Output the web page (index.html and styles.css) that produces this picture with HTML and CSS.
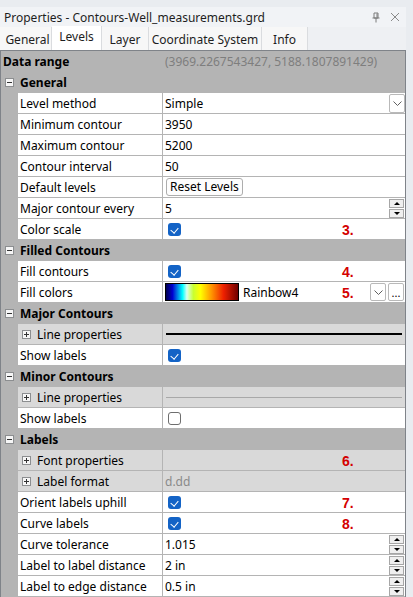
FILE: index.html
```html
<!DOCTYPE html>
<html lang="en">
<head>
    <meta charset="UTF-8">
    <title>Properties - Contours-Well_measurements.grd</title>
    <link rel="stylesheet" href="styles.css">
</head>
<body>

<div class="window">
    <!-- Title bar -->
    <div class="titlebar">
        <span class="title">Properties - Contours-Well_measurements.grd</span>
        <svg class="tb-icon" width="10" height="11" viewBox="0 0 10 11"><path d="M3 1h4v5H3zM1.5 6h7M5 6v4.5M6 1.5v4" fill="none" stroke="#7a7a7a" stroke-width="1"/></svg>
        <svg class="tb-icon" width="10" height="10" viewBox="0 0 10 10"><path d="M1 1l8 8M9 1l-8 8" stroke="#8a8a8a" stroke-width="1"/></svg>
    </div>

    <!-- Tabs -->
    <div class="tabs">
        <div class="tab t-general">General</div>
        <div class="tab active t-levels">Levels</div>
        <div class="tab t-layer">Layer</div>
        <div class="tab t-coord">Coordinate System</div>
        <div class="tab t-info">Info</div>
    </div>

    <!-- Property grid -->
    <div class="grid">
        <div class="data-row">
            <div class="data-name">Data range</div>
            <div class="data-val">(3969.2267543427, 5188.1807891429)</div>
        </div>

        <div class="cat"><span class="tog minus"></span>General</div>
        <div class="row">
            <div class="name">Level method</div>
            <div class="val">Simple<span class="drop"><svg width="9" height="5" viewBox="0 0 9 5"><path d="M0.5 0.5l4 4 4-4" fill="none" stroke="#606060"/></svg></span></div>
        </div>
        <div class="row"><div class="name">Minimum contour</div><div class="val">3950</div></div>
        <div class="row"><div class="name">Maximum contour</div><div class="val">5200</div></div>
        <div class="row"><div class="name">Contour interval</div><div class="val">50</div></div>
        <div class="row"><div class="name">Default levels</div><div class="val"><span class="btn-reset">Reset Levels</span></div></div>
        <div class="row">
            <div class="name">Major contour every</div>
            <div class="val">5<span class="spin"><span class="sb up"></span><span class="sb down"></span></span></div>
        </div>
        <div class="row"><div class="name">Color scale</div><div class="val"><span class="chk on"></span><span class="num">3.</span></div></div>

        <div class="cat"><span class="tog minus"></span>Filled Contours</div>
        <div class="row"><div class="name">Fill contours</div><div class="val"><span class="chk on"></span><span class="num">4.</span></div></div>
        <div class="row">
            <div class="name">Fill colors</div>
            <div class="val">
                <span class="ramp"></span><span class="ramp-name">Rainbow4</span><span class="num">5.</span>
                <span class="drop small"><svg width="9" height="5" viewBox="0 0 9 5"><path d="M0.5 0.5l4 4 4-4" fill="none" stroke="#606060"/></svg></span>
                <span class="dots">...</span>
            </div>
        </div>

        <div class="cat"><span class="tog minus"></span>Major Contours</div>
        <div class="row sub"><div class="name"><span class="tog plus"></span>Line properties</div><div class="val"><span class="line major"></span></div></div>
        <div class="row"><div class="name">Show labels</div><div class="val"><span class="chk on"></span></div></div>

        <div class="cat"><span class="tog minus"></span>Minor Contours</div>
        <div class="row sub"><div class="name"><span class="tog plus"></span>Line properties</div><div class="val"><span class="line minor"></span></div></div>
        <div class="row"><div class="name">Show labels</div><div class="val"><span class="chk"></span></div></div>

        <div class="cat"><span class="tog minus"></span>Labels</div>
        <div class="row sub"><div class="name"><span class="tog plus"></span>Font properties</div><div class="val"><span class="num">6.</span></div></div>
        <div class="row sub"><div class="name"><span class="tog plus"></span>Label format</div><div class="val muted">d.dd</div></div>
        <div class="row"><div class="name">Orient labels uphill</div><div class="val"><span class="chk on"></span><span class="num">7.</span></div></div>
        <div class="row"><div class="name">Curve labels</div><div class="val"><span class="chk on"></span><span class="num">8.</span></div></div>
        <div class="row">
            <div class="name">Curve tolerance</div>
            <div class="val">1.015<span class="spin"><span class="sb up"></span><span class="sb down"></span></span></div>
        </div>
        <div class="row">
            <div class="name">Label to label distance</div>
            <div class="val">2 in<span class="spin"><span class="sb up"></span><span class="sb down"></span></span></div>
        </div>
        <div class="row">
            <div class="name">Label to edge distance</div>
            <div class="val">0.5 in<span class="spin"><span class="sb up"></span><span class="sb down"></span></span></div>
        </div>
    </div>
</div>

</body>
</html>
```

FILE: styles.css
```css
* { margin: 0; padding: 0; box-sizing: border-box; }
body { background: #e9ecf0; font-family: "Noto Sans", "Open Sans", sans-serif; font-size: 12px; color: #000; overflow: hidden; }

.window { width: 406px; }

/* Title bar */
.titlebar { margin-top: 7px; height: 20px; background: #f1f3f6; display: flex; align-items: center; padding-left: 4px; padding-right: 6px; gap: 9px; color: #1e1e1e; }
.titlebar .title { flex: 1; }
.tb-icon { display: block; }

/* Tabs */
.tabs { height: 23px; display: flex; background: #eef0f3; }
.tab { height: 23px; line-height: 23px; padding-top: 1px; border-right: 1px solid #dadcdf; background: #f7f7f7; color: #1e1e1e; text-align: center; }
.tab.active { background: #fff; margin-top: -1px; height: 24px; line-height: 20px; }
.t-general { width: 52px; padding-left: 4px; }
.t-levels { width: 50px; }
.t-layer { width: 47px; }
.t-coord { width: 113px; }
.t-info { width: 46px; }

/* Grid */
.grid { border: 1px solid #7f8389; border-bottom: none; background: #b4b4b4; height: 548px; }
.data-row { height: 21px; display: flex; align-items: center; }
.data-name { width: 164px; padding-left: 2px; font-weight: bold; }
.data-val { color: #7e7e7e; }

.cat { height: 21px; display: flex; align-items: center; font-weight: bold; padding-left: 4px; gap: 6px; }

.row { height: 21px; display: flex; padding-left: 17px; padding-bottom: 1px; gap: 1px; }
.name { width: 144px; background: #fff; padding-left: 2px; display: flex; align-items: center; }
.val { flex: 1; background: #fff; padding-left: 2px; display: flex; align-items: center; position: relative; }
.row.sub .name, .row.sub .val { background: #d9d9d9; }
.row.sub .name { padding-left: 4px; gap: 6px; }
.val.muted { color: #8a8a8a; }

/* expand / collapse boxes */
.tog { width: 9px; height: 9px; border: 1px solid #8c8e90; background: #f6f6f6; position: relative; flex-shrink: 0; }
.tog::before { content: ""; position: absolute; left: 1px; top: 3px; width: 5px; height: 1px; background: #333; }
.tog.plus::after { content: ""; position: absolute; left: 3px; top: 1px; width: 1px; height: 5px; background: #333; }

/* controls */
.drop { margin-left: auto; width: 16px; height: 19px; border: 1px solid #b9b9b9; border-radius: 2px; background: #fff; display: flex; align-items: center; justify-content: center; }
.drop.small { height: 18px; margin-right: 2px; }
.dots { width: 16px; height: 18px; border: 1px solid #b9b9b9; border-radius: 2px; background: #fff; display: flex; align-items: flex-end; justify-content: center; line-height: 12px; font-size: 11px; padding-bottom: 1px; margin-right: 1px; }

.btn-reset { border: 1px solid #adadad; border-radius: 3px; background: #fdfdfd; height: 18px; line-height: 16px; padding: 0 3px; margin-left: 1px; }

.spin { margin-left: auto; margin-right: 1px; display: flex; flex-direction: column; gap: 1px; }
.sb { width: 15px; height: 9px; border: 1px solid #a6a6a6; background: #efefef; position: relative; }
.sb::before { content: ""; position: absolute; left: 4px; border-left: 3px solid transparent; border-right: 3px solid transparent; }
.sb.up::before { top: 2px; border-bottom: 3px solid #000; }
.sb.down::before { top: 2px; border-top: 3px solid #000; }

.chk { width: 13px; height: 13px; margin-left: 3px; border: 1px solid #6e6e6e; border-radius: 3px; background: #fff; position: relative; }
.chk.on { border: none; background: #1363c6; }
.chk.on::after { content: ""; position: absolute; left: 4px; top: 3px; width: 4px; height: 6px; border-right: 1.2px solid #fff; border-bottom: 1.2px solid #fff; transform: rotate(40deg); }

.num { position: absolute; left: 179px; top: 3px; font-family: "Liberation Sans", Arial, sans-serif; font-weight: bold; font-size: 14px; color: #d40000; }

.ramp { width: 74px; height: 18px; border: 1px solid #000; background: linear-gradient(to right, #000050 0%, #0000d0 9%, #00ffff 23%, #d8fff0 29%, #c8ff30 38%, #ffff00 48%, #ff9000 64%, #ee2000 80%, #700000 100%); }
.ramp-name { margin-left: 4px; }

.line { height: 1px; margin-left: 1px; margin-right: 3px; flex: 1; }
.line.major { background: #000; height: 1.5px; }
.line.minor { background: #a8a8a8; }
```
